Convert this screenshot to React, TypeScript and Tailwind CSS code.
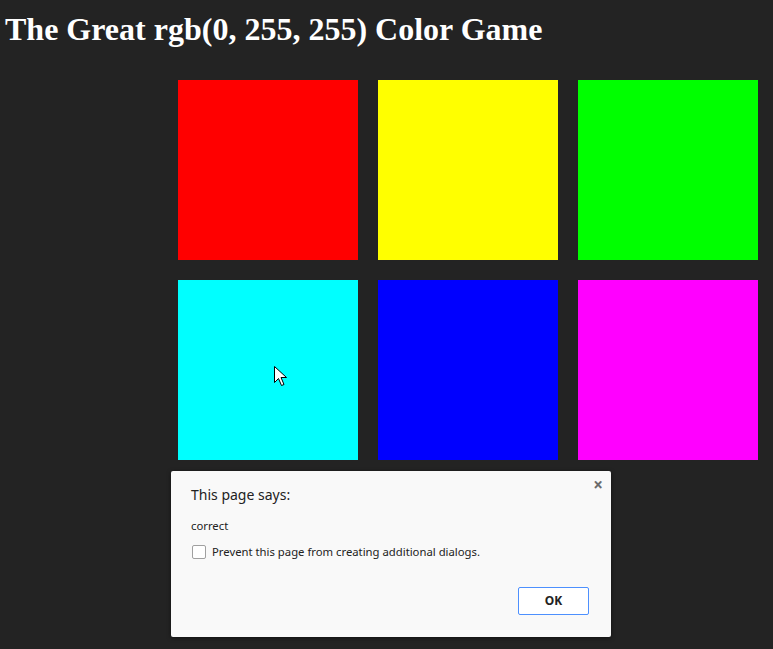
import React from "react";

const colors = ["#ff0000", "#ffff00", "#00ff00", "#00ffff", "#0000ff", "#ff00ff"];

function Cursor() {
  return (
    <svg className="absolute left-[96px] top-[86px]" width="14" height="22" viewBox="0 0 14 22">
      <path
        d="M0.5 0.5 L0.5 16.5 L4.5 12.5 L7.5 19.5 L10 18.5 L7 11.5 L12.5 11.5 Z"
        fill="#ffffff"
        stroke="#000000"
        strokeWidth="1"
      />
    </svg>
  );
}

export default function App() {
  return (
    <div className="relative min-h-[649px] w-full bg-[#232323]">
      <h1
        className="m-0 pl-[5px] pt-[11px] text-[32px] font-bold leading-[37px] text-white"
        style={{ fontFamily: '"Liberation Serif", "Times New Roman", serif' }}
      >
        The Great rgb(0, 255, 255) Color Game
      </h1>
      <div className="ml-[178px] mt-[32px] grid w-[580px] grid-cols-3 gap-[20px]">
        {colors.map((c, i) => (
          <div key={i} className="relative h-[180px] w-[180px]" style={{ backgroundColor: c }}>
            {i === 3 && <Cursor />}
          </div>
        ))}
      </div>

      <div
        className="absolute left-[171px] top-[471px] flex h-[166px] w-[440px] flex-col rounded-[2px] bg-[#f9f9f9] pb-[22px] pl-[20px] pr-[22px] pt-[14px] shadow-[0_1px_4px_rgba(0,0,0,0.5)]"
        style={{ fontFamily: '"Noto Sans", "Open Sans", sans-serif' }}
      >
        <div className="absolute right-[8px] top-[5px] text-[17px] font-bold leading-[17px] text-[#6b6b6b]">×</div>
        <div className="text-[14px] leading-[20px] text-[#222]">This page says:</div>
        <div className="mt-[13px] text-[11.3px] leading-[16px] text-[#222]">correct</div>
        <div className="ml-[1px] mt-[10px] flex items-center gap-[6px]">
          <div className="h-[14px] w-[14px] rounded-[2px] border border-[#a0a0a0] bg-white" />
          <span className="text-[11.3px] leading-[16px] text-[#222]">
            Prevent this page from creating additional dialogs.
          </span>
        </div>
        <div className="mt-auto flex justify-end">
          <div className="flex h-[28px] w-[71px] items-center justify-center rounded-[2px] border border-[#4d90fe] bg-white text-[12px] font-bold text-[#222]">
            OK
          </div>
        </div>
      </div>
    </div>
  );
}
